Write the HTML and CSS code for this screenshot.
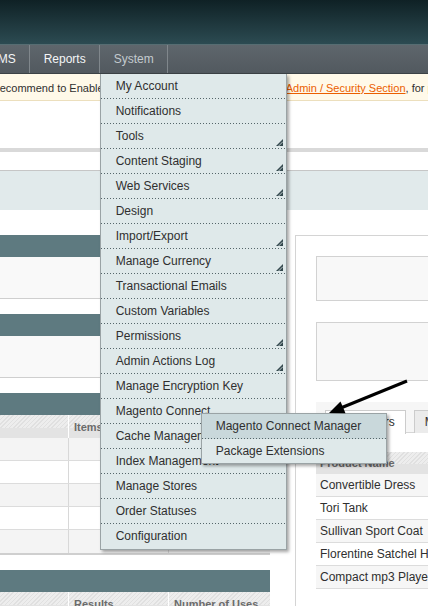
FILE: index.html
```html
<!DOCTYPE html>
<html>
<head>
<meta charset="utf-8">
<title>Magento Admin</title>
<link rel="stylesheet" href="styles.css">
</head>
<body>
<div class="header"></div>
<div class="nav">
  <ul class="nav-list">
    <li class="nav-item">CMS</li>
    <li class="nav-item">Reports</li>
    <li class="nav-item nav-active">System
      <ul class="menu">
        <li class="menu-item">My Account</li>
        <li class="menu-item">Notifications</li>
        <li class="menu-item">Tools<svg class="sub-arrow" viewBox="0 0 7 7"><polygon points="7,0 7,7 0,7" fill="#34494e"/><line x1="2.6" y1="7" x2="7" y2="2.6" stroke="#dfe9ea" stroke-width="0.8"/></svg></li>
        <li class="menu-item">Content Staging<svg class="sub-arrow" viewBox="0 0 7 7"><polygon points="7,0 7,7 0,7" fill="#34494e"/><line x1="2.6" y1="7" x2="7" y2="2.6" stroke="#dfe9ea" stroke-width="0.8"/></svg></li>
        <li class="menu-item">Web Services<svg class="sub-arrow" viewBox="0 0 7 7"><polygon points="7,0 7,7 0,7" fill="#34494e"/><line x1="2.6" y1="7" x2="7" y2="2.6" stroke="#dfe9ea" stroke-width="0.8"/></svg></li>
        <li class="menu-item">Design</li>
        <li class="menu-item">Import/Export<svg class="sub-arrow" viewBox="0 0 7 7"><polygon points="7,0 7,7 0,7" fill="#34494e"/><line x1="2.6" y1="7" x2="7" y2="2.6" stroke="#dfe9ea" stroke-width="0.8"/></svg></li>
        <li class="menu-item">Manage Currency<svg class="sub-arrow" viewBox="0 0 7 7"><polygon points="7,0 7,7 0,7" fill="#34494e"/><line x1="2.6" y1="7" x2="7" y2="2.6" stroke="#dfe9ea" stroke-width="0.8"/></svg></li>
        <li class="menu-item">Transactional Emails</li>
        <li class="menu-item">Custom Variables</li>
        <li class="menu-item">Permissions<svg class="sub-arrow" viewBox="0 0 7 7"><polygon points="7,0 7,7 0,7" fill="#34494e"/><line x1="2.6" y1="7" x2="7" y2="2.6" stroke="#dfe9ea" stroke-width="0.8"/></svg></li>
        <li class="menu-item">Admin Actions Log<svg class="sub-arrow" viewBox="0 0 7 7"><polygon points="7,0 7,7 0,7" fill="#34494e"/><line x1="2.6" y1="7" x2="7" y2="2.6" stroke="#dfe9ea" stroke-width="0.8"/></svg></li>
        <li class="menu-item">Manage Encryption Key</li>
        <li class="menu-item">Magento Connect<svg class="sub-arrow" viewBox="0 0 7 7"><polygon points="7,0 7,7 0,7" fill="#34494e"/><line x1="2.6" y1="7" x2="7" y2="2.6" stroke="#dfe9ea" stroke-width="0.8"/></svg>
          <ul class="submenu">
            <li class="submenu-item submenu-hover">Magento Connect Manager</li>
            <li class="submenu-item">Package Extensions</li>
          </ul>
        </li>
        <li class="menu-item">Cache Management</li>
        <li class="menu-item">Index Management</li>
        <li class="menu-item">Manage Stores</li>
        <li class="menu-item">Order Statuses</li>
        <li class="menu-item">Configuration</li>
      </ul>
    </li>
  </ul>
</div>
<div class="notice">
  <p class="notice-text">recommend to Enable "Add Secret Key to URLs" within the <a class="notice-link">Admin / Security Section</a>, for protection against possible attacks.</p>
</div>
<div class="content">
  <div class="rule-thick"></div>
  <div class="rule-thin"></div>
  <div class="blue-band"></div>
  <div class="main">
    <div class="left-col">
      <section class="box">
        <div class="box-head"></div>
        <div class="box-body"></div>
      </section>
      <section class="box">
        <div class="box-head"></div>
        <div class="box-body"></div>
      </section>
      <section class="box">
        <div class="box-head"></div>
        <div class="grid">
          <div class="grid-row grid-header"><div class="cell"></div><div class="cell">Items</div><div class="cell"></div></div>
          <div class="grid-row row-even"><div class="cell"></div><div class="cell"></div><div class="cell"></div></div>
          <div class="grid-row"><div class="cell"></div><div class="cell"></div><div class="cell"></div></div>
          <div class="grid-row row-even"><div class="cell"></div><div class="cell"></div><div class="cell"></div></div>
          <div class="grid-row"><div class="cell"></div><div class="cell"></div><div class="cell"></div></div>
          <div class="grid-row row-even row-last"><div class="cell"></div><div class="cell"></div><div class="cell"></div></div>
        </div>
      </section>
      <section class="box">
        <div class="box-head"></div>
        <div class="grid">
          <div class="grid-row grid-header"><div class="cell"></div><div class="cell">Results</div><div class="cell">Number of Uses</div></div>
        </div>
      </section>
    </div>
    <div class="right-col">
      <div class="panel-box panel-short"></div>
      <div class="panel-box panel-tall"></div>
      <div class="tabs">
        <div class="tab tab-active">Bestsellers</div>
        <div class="tab">Most Viewed Products</div>
      </div>
      <div class="tab-content">
        <div class="pgrid-head">Product Name</div>
        <div class="prow row-even">Convertible Dress</div>
        <div class="prow">Tori Tank</div>
        <div class="prow row-even">Sullivan Sport Coat</div>
        <div class="prow">Florentine Satchel Handbag</div>
        <div class="prow row-even">Compact mp3 Player</div>
      </div>
    </div>
  </div>
</div>
<svg class="annot" viewBox="0 0 428 606" width="428" height="606">
  <line x1="407" y1="381" x2="342" y2="407.5" stroke="#000" stroke-width="3"/>
  <polygon points="329,413 345.5,413.3 340.5,401.5" fill="#000"/>
</svg>
</body>
</html>
```
FILE: styles.css
```css
html, body {
  margin: 0;
  padding: 0;
  width: 428px;
  height: 606px;
  overflow: hidden;
}
body {
  position: relative;
  font: 12px/1.2 "Liberation Sans", Arial, sans-serif;
  color: #2f2f2f;
  background: #fff;
}
.header {
  height: 44px;
  background: linear-gradient(#0f2125, #2c4b52);
  border-bottom: 1px solid #566d72;
}
.nav {
  height: 28px;
  background: linear-gradient(#5e666c, #52595f);
  border-bottom: 1px solid #3b4246;
  position: relative;
  z-index: 10;
}
.nav-list {
  display: flex;
  margin: 0 0 0 -25px;
  padding: 0;
  list-style: none;
  height: 28px;
}
.nav-item {
  position: relative;
  padding: 0 13px 0 14px;
  line-height: 28px;
  border-right: 1px solid #80878c;
  color: #f4f6f7;
  white-space: nowrap;
}
.nav-active {
  color: #c3cace;
}
.menu {
  position: absolute;
  left: 0;
  top: 29px;
  width: 185px;
  margin: 0;
  padding: 0;
  list-style: none;
  background: #dfe9ea;
  border: 1px solid #9aa3a5;
  border-top: 0;
  box-shadow: 2px 2px 3px rgba(0, 0, 0, 0.35);
}
.menu-item {
  position: relative;
  height: 25px;
  box-sizing: border-box;
  padding-left: 15px;
  line-height: 24px;
  color: #2f2f2f;
  background-image: linear-gradient(to right, #55666a 1px, transparent 1px);
  background-size: 3px 1px;
  background-repeat: repeat-x;
  background-position: 0 100%;
}
.menu-item:last-child {
  background-image: none;
}
.sub-arrow {
  position: absolute;
  right: 3px;
  bottom: 3px;
  width: 7px;
  height: 7px;
}
.submenu {
  position: absolute;
  left: 100px;
  top: 14px;
  width: 184px;
  margin: 0;
  padding: 0;
  list-style: none;
  background: #dfe9ea;
  border: 1px solid #9aa3a5;
  box-shadow: 2px 2px 3px rgba(0, 0, 0, 0.35);
  z-index: 12;
}
.submenu-item {
  height: 25px;
  box-sizing: border-box;
  padding-left: 14px;
  line-height: 24px;
  background-image: linear-gradient(to right, #55666a 1px, transparent 1px);
  background-size: 3px 1px;
  background-repeat: repeat-x;
  background-position: 0 100%;
}
.submenu-item:last-child {
  background-image: none;
  height: 24px;
}
.submenu-hover {
  background-color: #c9d8db;
}
.notice {
  height: 26px;
  background: #fff9e9;
  border-bottom: 1px solid #ecdfbd;
  overflow: hidden;
}
.notice-text {
  margin: 0 0 0 -4px;
  font-size: 11px;
  line-height: 28px;
  white-space: nowrap;
  color: #2f2f2f;
}
.notice-link {
  color: #eb5e00;
  text-decoration: underline;
}
.content {
  padding-top: 47px;
}
.rule-thick {
  height: 4px;
  background: #d9d9d9;
}
.rule-thin {
  height: 18px;
  border-bottom: 1px solid #c6c6c6;
}
.blue-band {
  height: 39px;
  background: #e1eaeb;
  margin-bottom: 25px;
}
.main {
  display: flex;
  align-items: flex-start;
  width: 1000px;
}
.left-col {
  width: 270px;
  flex: none;
}
.box {
  margin-bottom: 15px;
}
.box-head {
  height: 22px;
  background: #5e7a80;
}
.box-body {
  height: 41px;
  background: #f9f9f9;
  border-bottom: 1px solid #cfcfcf;
}
.grid-row {
  display: grid;
  grid-template-columns: 69px 100px 101px;
  height: 23px;
  box-sizing: border-box;
  border-bottom: 1px solid #dcdcdc;
  background: #fff;
}
.row-even {
  background: #f4f4f4;
}
.row-last {
  height: 25px;
  border-bottom: 2px solid #cfcfcf;
}
.cell {
  border-right: 1px solid #d8d8d8;
  padding-left: 5px;
  overflow: hidden;
  white-space: nowrap;
}
.cell:last-child {
  border-right: 0;
}
.grid-header {
  border-bottom: 0;
  background:
    linear-gradient(to bottom, transparent 55%, #e3e3e3 55%),
    repeating-linear-gradient(-45deg, #ededed 0 2px, #e0e0e0 2px 3px);
}
.grid-header .cell {
  border-right-color: #fff;
  font-weight: bold;
  font-size: 11px;
  line-height: 24px;
  color: #6b6b6b;
}
.right-col {
  flex: none;
  width: 600px;
  height: 400px;
  margin-left: 25px;
  padding: 20px 0 0 20px;
  border-left: 1px solid #d4d4d4;
  border-top: 1px solid #d4d4d4;
  box-sizing: border-box;
}
.panel-box {
  background: #f8f8f8;
  border: 1px solid #d2d2d2;
  box-sizing: border-box;
  margin-bottom: 21px;
}
.panel-short {
  height: 45px;
}
.panel-tall {
  height: 59px;
}
.tabs {
  display: flex;
  gap: 8px;
  height: 31px;
  box-sizing: border-box;
  padding: 8px 0 0 9px;
  background: #f6f6f6;
  border-bottom: 1px solid #d6d6d6;
}
.tab {
  height: 23px;
  box-sizing: border-box;
  padding: 0 10px;
  line-height: 23px;
  border: 1px solid #cccccc;
  border-bottom: 0;
  background: #ebebeb;
  white-space: nowrap;
}
.tab-active {
  background: #fff;
  height: 24px;
}
.tab-content {
  padding-top: 19px;
  background: #fff;
}
.pgrid-head {
  height: 22px;
  padding-left: 4px;
  line-height: 22px;
  font-weight: bold;
  font-size: 11px;
  color: #6b6b6b;
  background:
    linear-gradient(to bottom, transparent 55%, #e3e3e3 55%),
    repeating-linear-gradient(-45deg, #ededed 0 2px, #e0e0e0 2px 3px);
}
.prow {
  height: 23px;
  box-sizing: border-box;
  padding-left: 4px;
  line-height: 22px;
  border-bottom: 1px solid #dcdcdc;
  background: #fff;
  white-space: nowrap;
}
.prow.row-even {
  background: #f6f6f6;
}
.annot {
  position: absolute;
  left: 0;
  top: 0;
  z-index: 50;
  pointer-events: none;
}
```
